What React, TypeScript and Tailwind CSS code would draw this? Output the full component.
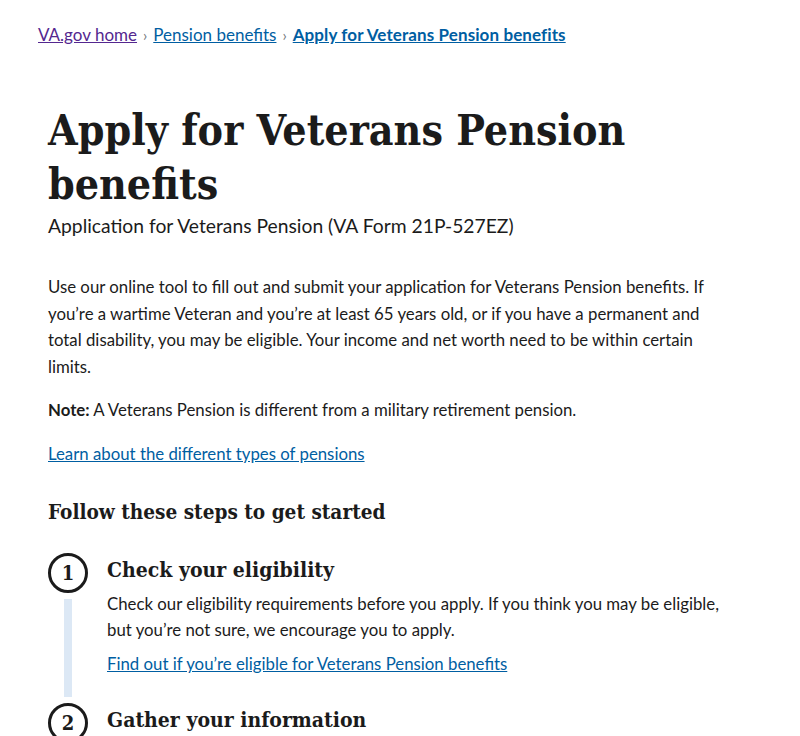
import React from "react";

const sans = "font-['Source_Sans_Pro','Lato','Liberation_Sans',sans-serif]";
const serif = "font-['DejaVu_Serif_Condensed','DejaVu_Serif',serif]";

const Crumb: React.FC = () => (
  <nav className={`${sans} text-[17px] leading-[24px] pt-[23px] pl-[38px] flex items-center`}>
    <a href="#" className="text-[#54278f] underline">VA.gov home</a>
    <span className="mx-[6px] text-[#71767a] text-[15px]">›</span>
    <a href="#" className="text-[#005ea2] underline">Pension benefits</a>
    <span className="mx-[6px] text-[#71767a] text-[15px]">›</span>
    <a href="#" className="text-[#005ea2] underline font-bold tracking-[0.1px]">
      Apply for Veterans Pension benefits
    </a>
  </nav>
);

const Step: React.FC<{ n: number; title: string; last?: boolean; children?: React.ReactNode }> = ({
  n,
  title,
  last,
  children,
}) => (
  <div className="flex">
    <div className="flex flex-col items-center w-[40px] shrink-0">
      <div
        className={`${serif} w-[40px] h-[40px] rounded-full border-[3px] border-[#1b1b1b] bg-white flex items-center justify-center text-[20px] font-bold text-[#1b1b1b]`}
      >
        {n}
      </div>
      {!last && <div className="w-[8px] grow bg-[#dce8f5] my-[6px]" />}
    </div>
    <div className="ml-[19px] pb-[26px] w-[632px]">
      <h3 className={`${serif} font-bold text-[21px] leading-[30px] text-[#1b1b1b] mt-[2px]`}>{title}</h3>
      {children}
    </div>
  </div>
);

export default function App() {
  return (
    <div className="bg-white text-[#1b1b1b] overflow-hidden h-[736px]">
      <Crumb />
      <main className={`${sans} px-[48px]`}>
        <h1 className={`${serif} font-bold text-[42.5px] leading-[54px] mt-[56px] text-[#1b1b1b]`}>
          Apply for Veterans Pension benefits
        </h1>
        <p className="text-[19.3px] leading-[28px] mt-[1px]">
          Application for Veterans Pension (VA Form 21P-527EZ)
        </p>
        <div className="w-[680px] text-[16.8px] leading-[26.6px]">
          <p className="mt-[34px]">
            Use our online tool to fill out and submit your application for Veterans Pension benefits. If
            you’re a wartime Veteran and you’re at least 65 years old, or if you have a permanent and total
            disability, you may be eligible. Your income and net worth need to be within certain limits.
          </p>
          <p className="mt-[17px]">
            <strong>Note:</strong> A Veterans Pension is different from a military retirement pension.
          </p>
          <p className="mt-[17px]">
            <a href="#" className="text-[#005ea2] underline">
              Learn about the different types of pensions
            </a>
          </p>
        </div>
        <h2 className={`${serif} font-bold text-[20.6px] leading-[28px] mt-[30px]`}>
          Follow these steps to get started
        </h2>
        <div className="mt-[27px] text-[16.8px] leading-[26px]">
          <Step n={1} title="Check your eligibility">
            <p className="mt-[6px]">
              Check our eligibility requirements before you apply. If you think you may be eligible,
              but you’re not sure, we encourage you to apply.
            </p>
            <p className="mt-[8px]">
              <a href="#" className="text-[#005ea2] underline">
                Find out if you’re eligible for Veterans Pension benefits
              </a>
            </p>
          </Step>
          <Step n={2} title="Gather your information" last />
        </div>
      </main>
    </div>
  );
}
